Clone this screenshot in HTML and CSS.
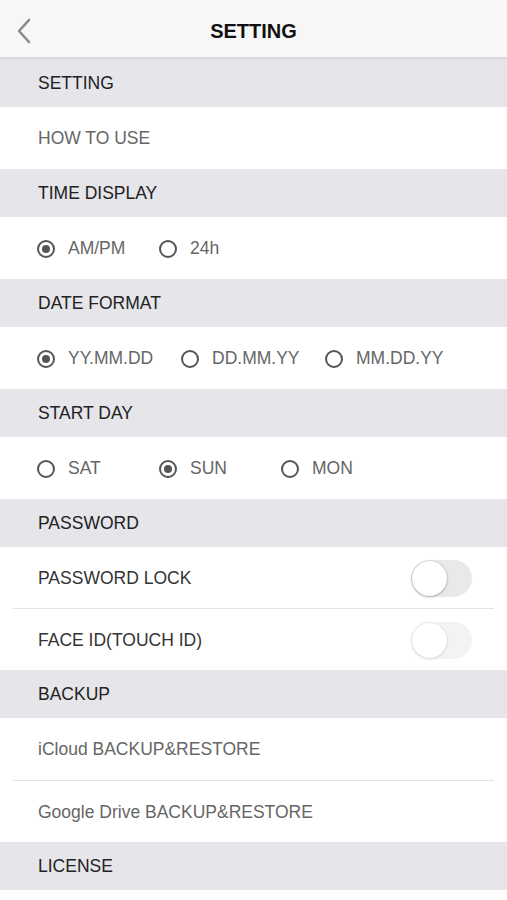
FILE: index.html
```html
<!DOCTYPE html>
<html>
<head>
<meta charset="utf-8">
<link rel="stylesheet" href="styles.css">
</head>
<body>
<div class="nav">
  <svg class="back" width="16" height="26" viewBox="0 0 16 26"><path d="M13 2 L3 13 L13 24" fill="none" stroke="#8a8a8e" stroke-width="2.6" stroke-linecap="round" stroke-linejoin="round"/></svg>
  <div class="title">SETTING</div>
</div>
<div class="head">SETTING</div>
<div class="row gray">HOW TO USE</div>
<div class="head">TIME DISPLAY</div>
<div class="row radios w122">
  <div class="opt"><span class="radio on"></span>AM/PM</div>
  <div class="opt"><span class="radio"></span>24h</div>
</div>
<div class="head">DATE FORMAT</div>
<div class="row radios w144">
  <div class="opt"><span class="radio on"></span>YY.MM.DD</div>
  <div class="opt"><span class="radio"></span>DD.MM.YY</div>
  <div class="opt"><span class="radio"></span>MM.DD.YY</div>
</div>
<div class="head">START DAY</div>
<div class="row radios w122">
  <div class="opt"><span class="radio"></span>SAT</div>
  <div class="opt"><span class="radio on"></span>SUN</div>
  <div class="opt"><span class="radio"></span>MON</div>
</div>
<div class="head">PASSWORD</div>
<div class="group">
  <div class="row dark sep">PASSWORD LOCK<span class="switch"></span></div>
  <div class="row dark">FACE ID(TOUCH ID)<span class="switch disabled"></span></div>
</div>
<div class="head">BACKUP</div>
<div class="group">
  <div class="row gray sep tall">iCloud BACKUP&amp;RESTORE</div>
  <div class="row gray">Google Drive BACKUP&amp;RESTORE</div>
</div>
<div class="head">LICENSE</div>
</body>
</html>
```
FILE: styles.css
```css
html, body {
  margin: 0;
  padding: 0;
  background: #ffffff;
  font-family: "Liberation Sans", Arial, sans-serif;
  font-size: 17.5px;
}
.nav {
  height: 57px;
  background: #f7f7f7;
  border-bottom: 2px solid #d9d9db;
  display: flex;
  align-items: center;
  justify-content: center;
  position: relative;
}
.back {
  position: absolute;
  left: 16px;
  top: 18px;
}
.title {
  font-weight: bold;
  font-size: 20px;
  color: #111;
  margin-top: 5px;
}
.head {
  height: 48px;
  background: #e5e5ea;
  color: #222;
  display: flex;
  align-items: center;
  padding-left: 38px;
  padding-top: 1px;
  box-sizing: border-box;
}
.row {
  height: 62px;
  display: flex;
  align-items: center;
  padding-left: 38px;
  padding-right: 35px;
  padding-top: 1px;
  box-sizing: border-box;
  position: relative;
}
.group .row {
  height: 61px;
}
.group .row.tall {
  height: 62px;
}
.gray { color: #666; }
.dark { color: #333; justify-content: space-between; }
.sep::after {
  content: "";
  position: absolute;
  left: 13px;
  right: 13px;
  bottom: -1px;
  height: 1px;
  background: #e4e4e6;
}
.group .sep { margin-bottom: 1px; }
.radios {
  display: grid;
  color: #666;
  padding-left: 37px;
}
.w122 { grid-template-columns: 122px 122px 122px; }
.w144 { grid-template-columns: 144px 144px 144px; }
.opt {
  display: flex;
  align-items: center;
}
.radio {
  width: 14px;
  height: 14px;
  border: 2px solid #555;
  border-radius: 50%;
  margin-right: 13px;
  position: relative;
  flex: none;
}
.radio.on::after {
  content: "";
  position: absolute;
  left: 3px;
  top: 3px;
  width: 8px;
  height: 8px;
  border-radius: 50%;
  background: #555;
}
.switch {
  width: 61px;
  height: 37px;
  border-radius: 19px;
  background: #e9e9ea;
  position: relative;
  flex: none;
}
.switch::after {
  content: "";
  position: absolute;
  left: 1px;
  top: 1px;
  width: 35px;
  height: 35px;
  border-radius: 50%;
  background: #fff;
  box-shadow: 0 1px 3px rgba(0,0,0,0.25), 0 0 0 0.5px rgba(0,0,0,0.1);
}
.switch.disabled {
  opacity: 0.5;
}
```
